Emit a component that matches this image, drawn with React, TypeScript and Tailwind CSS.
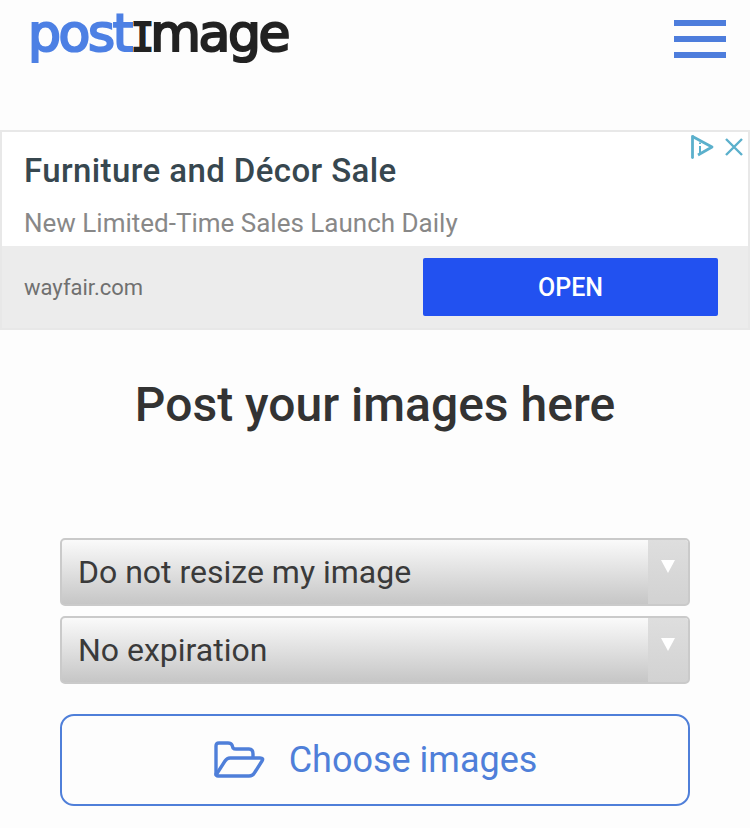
import { ReactNode } from "react";

function AdChoices() {
  return (
    <svg width="24" height="26" viewBox="0 0 24 26" fill="none" stroke="#5bb0cc" strokeWidth="2.8">
      <path d="M2.5 2.5 L22 13 L8 21" strokeLinejoin="round" />
      <path d="M2.5 2.5 V23.5" strokeLinecap="round" />
      <path d="M10 12 V19 M10 8.5 V10" strokeWidth="2" />
    </svg>
  );
}

function CloseIcon() {
  return (
    <svg width="20" height="20" viewBox="0 0 20 20" stroke="#5bb0cc" strokeWidth="2.4" fill="none">
      <path d="M2 2 L18 18 M18 2 L2 18" />
    </svg>
  );
}

function FolderIcon() {
  return (
    <svg width="52" height="38" viewBox="0 0 52 38" fill="none" stroke="#4f7fd9" strokeWidth="3.4" strokeLinejoin="round" strokeLinecap="round">
      <path d="M3 33 V5 Q3 2 6 2 H15 Q18 2 19 4 L20 7 Q21 8 23 8 H36 Q40 8 40 13 V16" />
      <path d="M3 34 L12 20 Q14 17 17 17 H47 Q51 17 49 20 L42 31 Q40 35 36 35 H5 Q3 35 3 33" />
    </svg>
  );
}

function SelectBox({ children }: { children: ReactNode }) {
  return (
    <div className="flex h-[68px] w-full overflow-hidden rounded-[5px] border-2 border-[#cacaca] bg-[linear-gradient(#fafafa,#c6c6c6)]">
      <div className="flex-1 pl-[16px] text-[32px] leading-[64px] text-[#3a3a3a]">{children}</div>
      <div className="flex w-[40px] justify-center bg-[linear-gradient(#dedede,#d2d2d2)] pt-[20px]">
        <div className="h-0 w-0 border-x-[7px] border-t-[13px] border-x-transparent border-t-white" />
      </div>
    </div>
  );
}

export default function App() {
  return (
    <div className="min-h-[828px] w-[750px] overflow-hidden bg-[#fdfdfd] font-['Roboto',sans-serif]">
      {/* Header */}
      <div className="flex h-[130px] items-start justify-between pl-[28px] pr-[24px]">
        <div className="-mt-[2px] whitespace-nowrap font-['DejaVu_Sans',sans-serif] text-[52px] leading-[70px] tracking-[-2.4px] [-webkit-text-stroke:2.2px_currentColor]">
          <span className="text-[#4d80e4]">post</span>
          <span className="font-['DejaVu_Sans_Mono',monospace] text-[39px] tracking-[-4px] text-[#222]">I</span>
          <span className="text-[#222]">mage</span>
        </div>
        <div className="mt-[20px] flex w-[52px] flex-col gap-[10px]">
          <div className="h-[6px] bg-[#4d7ddc]" />
          <div className="h-[6px] bg-[#4d7ddc]" />
          <div className="h-[6px] bg-[#4d7ddc]" />
        </div>
      </div>

      {/* Ad */}
      <div className="relative h-[200px] border-2 border-[#e8e8e8] bg-white">
        <div className="absolute right-[4px] top-[2px] flex items-center gap-[10px]">
          <AdChoices />
          <CloseIcon />
        </div>
        <div className="h-[114px] pl-[22px]">
          <div className="pt-[20px] text-[33px] font-medium leading-[38px] tracking-[0.4px] text-[#37474f]">
            Furniture and Décor Sale
          </div>
          <div className="mt-[18px] text-[26px] leading-[30px] text-[#888]">
            New Limited-Time Sales Launch Daily
          </div>
        </div>
        <div className="flex h-[82px] items-center justify-between bg-[#ececec] pl-[22px] pr-[30px]">
          <span className="text-[22px] text-[#707070]">wayfair.com</span>
          <div className="flex h-[58px] w-[295px] items-center justify-center rounded-[2px] bg-[#2251f0] pt-[2px] text-[25px] font-medium text-white">
            OPEN
          </div>
        </div>
      </div>

      <h1 className="mt-[46px] text-center text-[48px] font-medium leading-[58px] text-[#333]">
        Post your images here
      </h1>

      {/* Form */}
      <div className="mt-[104px] flex flex-col px-[60px]">
        <div className="flex flex-col gap-[10px]">
          <SelectBox>Do not resize my image</SelectBox>
          <SelectBox>No expiration</SelectBox>
        </div>
        <div className="mt-[30px] flex h-[92px] items-center justify-center gap-[24px] rounded-[14px] border-2 border-[#4f7fd9] text-[36px] text-[#4f7fd9]">
          <FolderIcon />
          <span>Choose images</span>
        </div>
      </div>
    </div>
  );
}
